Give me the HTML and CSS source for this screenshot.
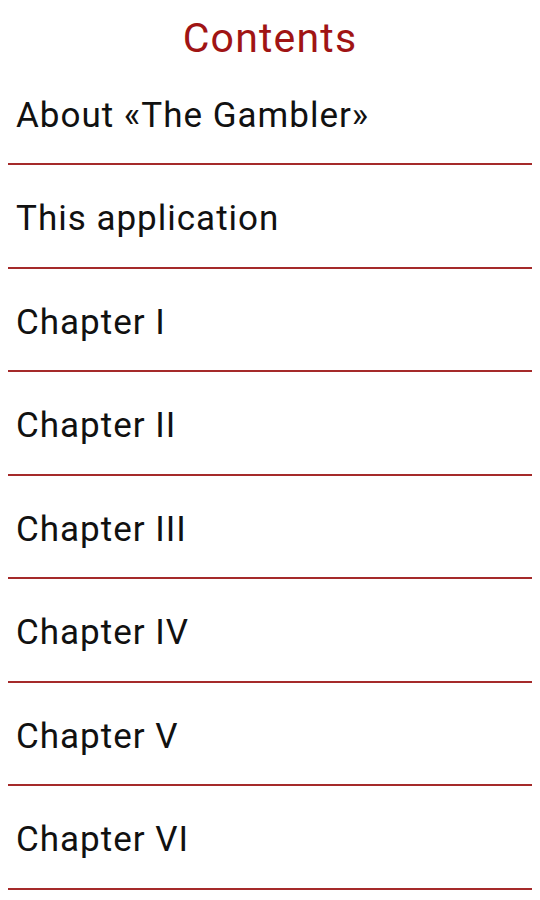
FILE: index.html
```html
<!DOCTYPE html>
<html>
<head>
<meta charset="utf-8">
<link rel="stylesheet" href="styles.css">
</head>
<body>
<div class="page">
  <h1 class="title">Contents</h1>
  <ul class="toc">
    <li class="item">About «The Gambler»</li>
    <li class="item">This application</li>
    <li class="item">Chapter I</li>
    <li class="item">Chapter II</li>
    <li class="item">Chapter III</li>
    <li class="item">Chapter IV</li>
    <li class="item">Chapter V</li>
    <li class="item">Chapter VI</li>
  </ul>
</div>
</body>
</html>
```
FILE: styles.css
```css
html, body {
  margin: 0;
  padding: 0;
  background: #ffffff;
}
.page {
  font-family: Roboto, "Noto Sans", sans-serif;
  padding: 0 8px;
}
.title {
  margin: 0;
  height: 61.5px;
  box-sizing: border-box;
  padding-top: 16px;
  line-height: 45px;
  font-size: 41px;
  letter-spacing: 1.2px;
  font-weight: 400;
  text-align: center;
  color: #a01414;
}
.toc {
  list-style: none;
  margin: 0;
  padding: 0;
}
.item {
  height: 103.5px;
  box-sizing: border-box;
  padding: 6px 0 0 8px;
  line-height: 95.5px;
  font-size: 35px;
  letter-spacing: 1px;
  color: #111111;
  border-bottom: 2px solid #a52a2a;
}
```
